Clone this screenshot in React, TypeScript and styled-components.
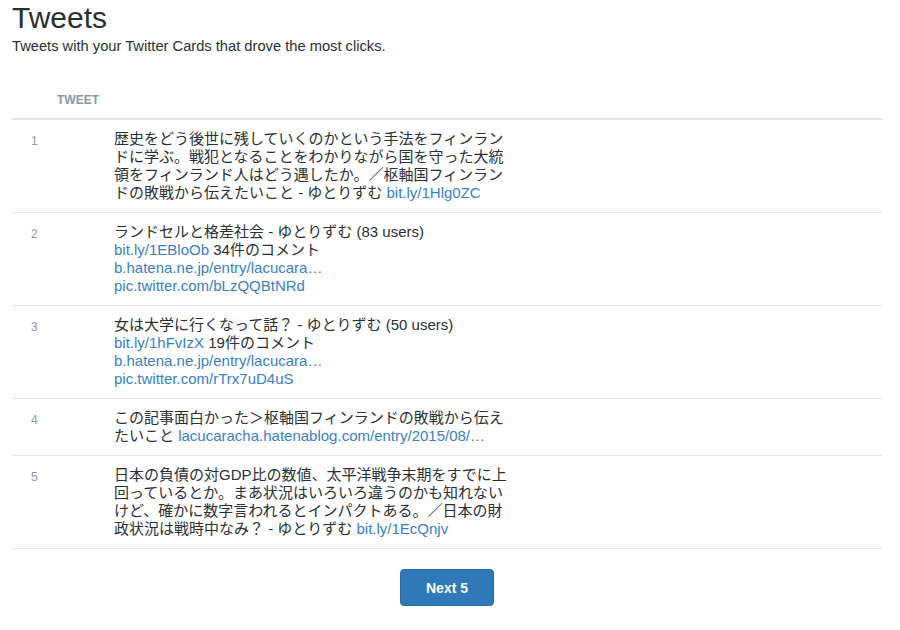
import React from "react";
import styled, { createGlobalStyle } from "styled-components";

const GlobalStyle = createGlobalStyle`
  body {
    margin: 0;
    background: #ffffff;
    color: #292f33;
    font-family: "Liberation Sans", "Noto Sans CJK JP", sans-serif;
  }
`;

const Page = styled.div`
  padding: 0 18px 24px 12px;
`;

const Title = styled.h1`
  margin: 0;
  font-size: 30px;
  line-height: 36px;
  font-weight: normal;
  color: #292f33;
`;

const Subtitle = styled.p`
  margin: 0;
  font-size: 14.7px;
  line-height: 20px;
  color: #292f33;
`;

const Table = styled.table`
  width: 100%;
  margin-top: 27px;
  border-collapse: collapse;
`;

const HeadCell = styled.th`
  padding: 8px 0 9px 45px;
  text-align: left;
  font-size: 12px;
  line-height: 18px;
  font-weight: bold;
  color: #8899a6;
  border-bottom: 2px solid #e1e8ed;
`;

const Row = styled.tr`
  border-bottom: 1px solid #e1e8ed;
`;

const RankCell = styled.td`
  width: 83px;
  padding: 12px 0 0 19px;
  vertical-align: top;
  font-size: 12px;
  line-height: 18px;
  color: #8899a6;
`;

const TextCell = styled.td`
  padding: 10px 0;
  vertical-align: top;
  font-size: 15px;
  line-height: 18px;
  color: #292f33;
  white-space: nowrap;
`;

const Link = styled.a`
  color: #3b7fbf;
  text-decoration: none;
`;

const NextButton = styled.button`
  display: block;
  margin: 20px auto 0;
  width: 94px;
  height: 37px;
  background: #3079b8;
  border: 1px solid #2a6ca6;
  border-radius: 4px;
  color: #ffffff;
  font-family: "Liberation Sans", sans-serif;
  font-size: 14px;
  font-weight: bold;
  cursor: pointer;
`;

type Segment = { text: string; link?: boolean };

// each tweet is a list of lines, each line a list of text / link pieces
const tweets: Segment[][][] = [
  [
    [{ text: "歴史をどう後世に残していくのかという手法をフィンラン" }],
    [{ text: "ドに学ぶ。戦犯となることをわかりながら国を守った大統" }],
    [{ text: "領をフィンランド人はどう遇したか。／枢軸国フィンラン" }],
    [{ text: "ドの敗戦から伝えたいこと - ゆとりずむ " }, { text: "bit.ly/1Hlg0ZC", link: true }],
  ],
  [
    [{ text: "ランドセルと格差社会 - ゆとりずむ (83 users)" }],
    [{ text: "bit.ly/1EBloOb", link: true }, { text: " 34件のコメント" }],
    [{ text: "b.hatena.ne.jp/entry/lacucara…", link: true }],
    [{ text: "pic.twitter.com/bLzQQBtNRd", link: true }],
  ],
  [
    [{ text: "女は大学に行くなって話？ - ゆとりずむ (50 users)" }],
    [{ text: "bit.ly/1hFvIzX", link: true }, { text: " 19件のコメント" }],
    [{ text: "b.hatena.ne.jp/entry/lacucara…", link: true }],
    [{ text: "pic.twitter.com/rTrx7uD4uS", link: true }],
  ],
  [
    [{ text: "この記事面白かった＞枢軸国フィンランドの敗戦から伝え" }],
    [{ text: "たいこと " }, { text: "lacucaracha.hatenablog.com/entry/2015/08/…", link: true }],
  ],
  [
    [{ text: "日本の負債の対GDP比の数値、太平洋戦争末期をすでに上" }],
    [{ text: "回っているとか。まあ状況はいろいろ違うのかも知れない" }],
    [{ text: "けど、確かに数字言われるとインパクトある。／日本の財" }],
    [{ text: "政状況は戦時中なみ？ - ゆとりずむ " }, { text: "bit.ly/1EcQnjv", link: true }],
  ],
];

const App: React.FC = () => {
  return (
    <Page>
      <GlobalStyle />
      <Title>Tweets</Title>
      <Subtitle>Tweets with your Twitter Cards that drove the most clicks.</Subtitle>
      <Table>
        <thead>
          <tr>
            <HeadCell colSpan={2}>TWEET</HeadCell>
          </tr>
        </thead>
        <tbody>
          {tweets.map((lines, i) => (
            <Row key={i}>
              <RankCell>{i + 1}</RankCell>
              <TextCell>
                {lines.map((line, j) => (
                  <React.Fragment key={j}>
                    {j > 0 && <br />}
                    {line.map((seg, k) =>
                      seg.link ? (
                        <Link key={k} href="#">
                          {seg.text}
                        </Link>
                      ) : (
                        <React.Fragment key={k}>{seg.text}</React.Fragment>
                      )
                    )}
                  </React.Fragment>
                ))}
              </TextCell>
            </Row>
          ))}
        </tbody>
      </Table>
      <NextButton>Next 5</NextButton>
    </Page>
  );
};

export default App;
